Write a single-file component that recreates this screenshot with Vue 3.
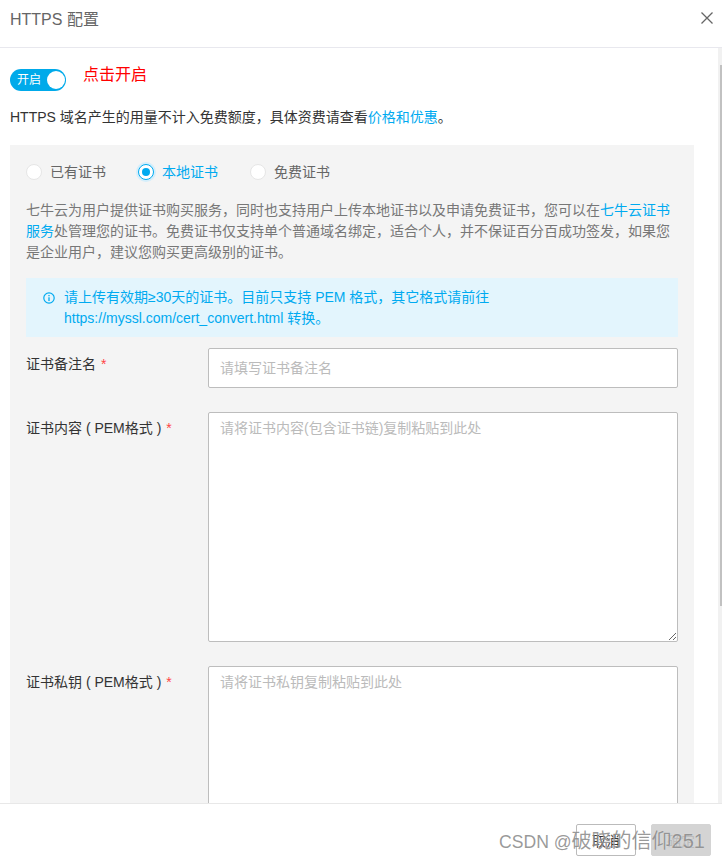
<script setup>
const radios = [
  { label: '已有证书', on: false },
  { label: '本地证书', on: true },
  { label: '免费证书', on: false },
]
</script>

<template>
  <div class="dialog">
    <header class="head">
      <span class="title">HTTPS 配置</span>
      <svg class="close" width="14" height="14" viewBox="0 0 14 14" aria-label="关闭">
        <path d="M1.5 1.5 12.5 12.5M12.5 1.5 1.5 12.5" stroke="#666" stroke-width="1.3" fill="none" />
      </svg>
    </header>

    <main class="body">
      <div class="scroll">
        <div class="toggle-row">
          <span class="switch"><span class="switch-text">开启</span><span class="knob"></span></span>
          <span class="hint">点击开启</span>
        </div>
        <p class="note">HTTPS 域名产生的用量不计入免费额度，具体资费请查看<a class="link">价格和优惠</a>。</p>

        <section class="panel">
          <div class="radios">
            <label v-for="r in radios" :key="r.label" class="radio" :class="{ on: r.on }">
              <span class="dot"></span>{{ r.label }}
            </label>
          </div>

          <p class="desc">七牛云为用户提供证书购买服务，同时也支持用户上传本地证书以及申请免费证书，您可以在<a class="link">七牛云证书服务</a>处管理您的证书。免费证书仅支持单个普通域名绑定，适合个人，并不保证百分百成功签发，如果您是企业用户，建议您购买更高级别的证书。</p>

          <div class="alert">
            <svg class="info" width="12" height="12" viewBox="0 0 12 12">
              <circle cx="6" cy="6" r="5.2" fill="none" stroke="#00aaf0" stroke-width="1.2" />
              <path d="M6 5.2V9M6 3V4.2" stroke="#00aaf0" stroke-width="1.3" fill="none" />
            </svg>
            <div>请上传有效期≥30天的证书。目前只支持 PEM 格式，其它格式请前往<br />https://myssl.com/cert_convert.html 转换。</div>
          </div>

          <div class="field first">
            <label class="name">证书备注名<i class="req">*</i></label>
            <input class="input" placeholder="请填写证书备注名" />
          </div>
          <div class="field">
            <label class="name">证书内容 ( PEM格式 )<i class="req">*</i></label>
            <textarea class="area" placeholder="请将证书内容(包含证书链)复制粘贴到此处"></textarea>
          </div>
          <div class="field">
            <label class="name">证书私钥 ( PEM格式 )<i class="req">*</i></label>
            <textarea class="area" placeholder="请将证书私钥复制粘贴到此处"></textarea>
          </div>
        </section>
      </div>
      <div class="track"><div class="thumb"></div></div>
    </main>

    <footer class="foot">
      <button class="btn">取消</button>
      <button class="btn primary">确定</button>
      <span class="mark"><span class="mark-latin">CSDN @</span>破晓的信仰251</span>
    </footer>
  </div>
</template>

<style>
html, body { margin: 0; background: #fff; }
</style>

<style scoped>
* { box-sizing: border-box; }
.dialog {
  width: 722px;
  height: 860px;
  display: flex;
  flex-direction: column;
  overflow: hidden;
  background: #fff;
  font-family: "Liberation Sans", "Noto Sans CJK SC", sans-serif;
  font-size: 14px;
  color: #333;
}
.head {
  height: 48px;
  flex: none;
  padding: 0 10px;
  display: flex;
  align-items: center;
  justify-content: space-between;
  border-bottom: 1px solid #e8e8ee;
}
.title { font-size: 16px; color: #666; position: relative; top: -6px; }
.close { position: relative; top: -6px; margin-right: -2px; }
.body { flex: 1; min-height: 0; display: flex; overflow: hidden; }
.scroll { flex: 1; min-width: 0; padding: 21px 24px 0 10px; overflow: hidden; }
.track { width: 4px; background: #f1f1f1; flex: none; }
.thumb { height: 541px; width: 2px; margin: 17px 0 0 2px; background: #c1c1c1; }
.toggle-row { display: flex; align-items: flex-start; height: 23px; }
.switch {
  width: 56px;
  height: 22px;
  border-radius: 11px;
  background: #00aaea;
  position: relative;
  display: block;
  flex: none;
}
.switch-text { position: absolute; left: 7px; top: 3px; font-size: 12px; line-height: 16px; color: #fff; }
.knob { position: absolute; right: 1px; top: 2px; width: 18px; height: 18px; border-radius: 50%; background: #fff; }
.hint { margin-left: 17px; margin-top: -5px; font-size: 16px; line-height: 22px; color: #f00; }
.note { margin: 14px 0 0; height: 22px; line-height: 22px; color: #333; font-size: 14px; }
.link { color: #00aaf0; }
.panel { margin-top: 17px; background: #f4f4f4; padding: 18px 16px 0; height: 660px; }
.radios { display: flex; height: 18px; }
.radio { display: flex; align-items: center; margin-right: 32px; color: #666; font-size: 14px; line-height: 18px; }
.radio.on { color: #00aaf0; }
.dot {
  width: 16px;
  height: 16px;
  border-radius: 50%;
  margin-right: 8px;
  background: #fff;
  border: 1px solid #e6e6e6;
  position: relative;
}
.radio.on .dot { border-color: #00aaf0; box-shadow: 0 0 0 2px #d4eefb; }
.radio.on .dot::after {
  content: "";
  position: absolute;
  left: 3px;
  top: 3px;
  width: 8px;
  height: 8px;
  border-radius: 50%;
  background: #00aaf0;
}
.desc { margin: 19px 0 0; line-height: 21px; color: #777; font-size: 14px; }
.alert {
  margin-top: 15px;
  height: 59px;
  padding: 9px 17px;
  background: #e3f5fd;
  color: #00aaf0;
  font-size: 14px;
  line-height: 21px;
  display: flex;
  gap: 9px;
}
.info { margin-top: 5px; flex: none; }
.field { display: flex; margin-top: 24px; align-items: flex-start; }
.field.first { margin-top: 11px; }
.name { width: 182px; flex: none; line-height: 20px; padding-top: 6px; color: #333; font-size: 14px; }
.req { font-style: normal; color: #f44; margin-left: 5px; }
.input, .area {
  width: 470px;
  border: 1px solid #bdbdbd;
  border-radius: 2px;
  background: #fff;
  padding: 0 11px;
  font: inherit;
  color: #333;
  outline: none;
  display: block;
}
.input { height: 40px; }
.area { height: 230px; padding-top: 5px; line-height: 20px; }
.input::placeholder, .area::placeholder { color: #bbb; opacity: 1; }
.foot {
  height: 57px;
  flex: none;
  border-top: 1px solid #e8e8e8;
  position: relative;
  display: flex;
  justify-content: flex-end;
  gap: 15px;
  padding: 20px 11px 0 0;
}
.btn {
  width: 60px;
  height: 32px;
  border: 1px solid #bbb;
  border-radius: 2px;
  background: #fff;
  font: inherit;
  color: #333;
  padding: 0;
}
.btn.primary { background: #d4d4d4; border-color: #d4d4d4; color: #bbb; }
.mark {
  position: absolute;
  left: 499px;
  top: 25px;
  font-size: 20px;
  line-height: 24px;
  color: rgba(120, 120, 120, 0.75);
  text-shadow: 0 0 1px rgba(255, 255, 255, 0.6);
  white-space: nowrap;
  pointer-events: none;
}
.mark-latin { font-size: 17.6px; }
</style>
